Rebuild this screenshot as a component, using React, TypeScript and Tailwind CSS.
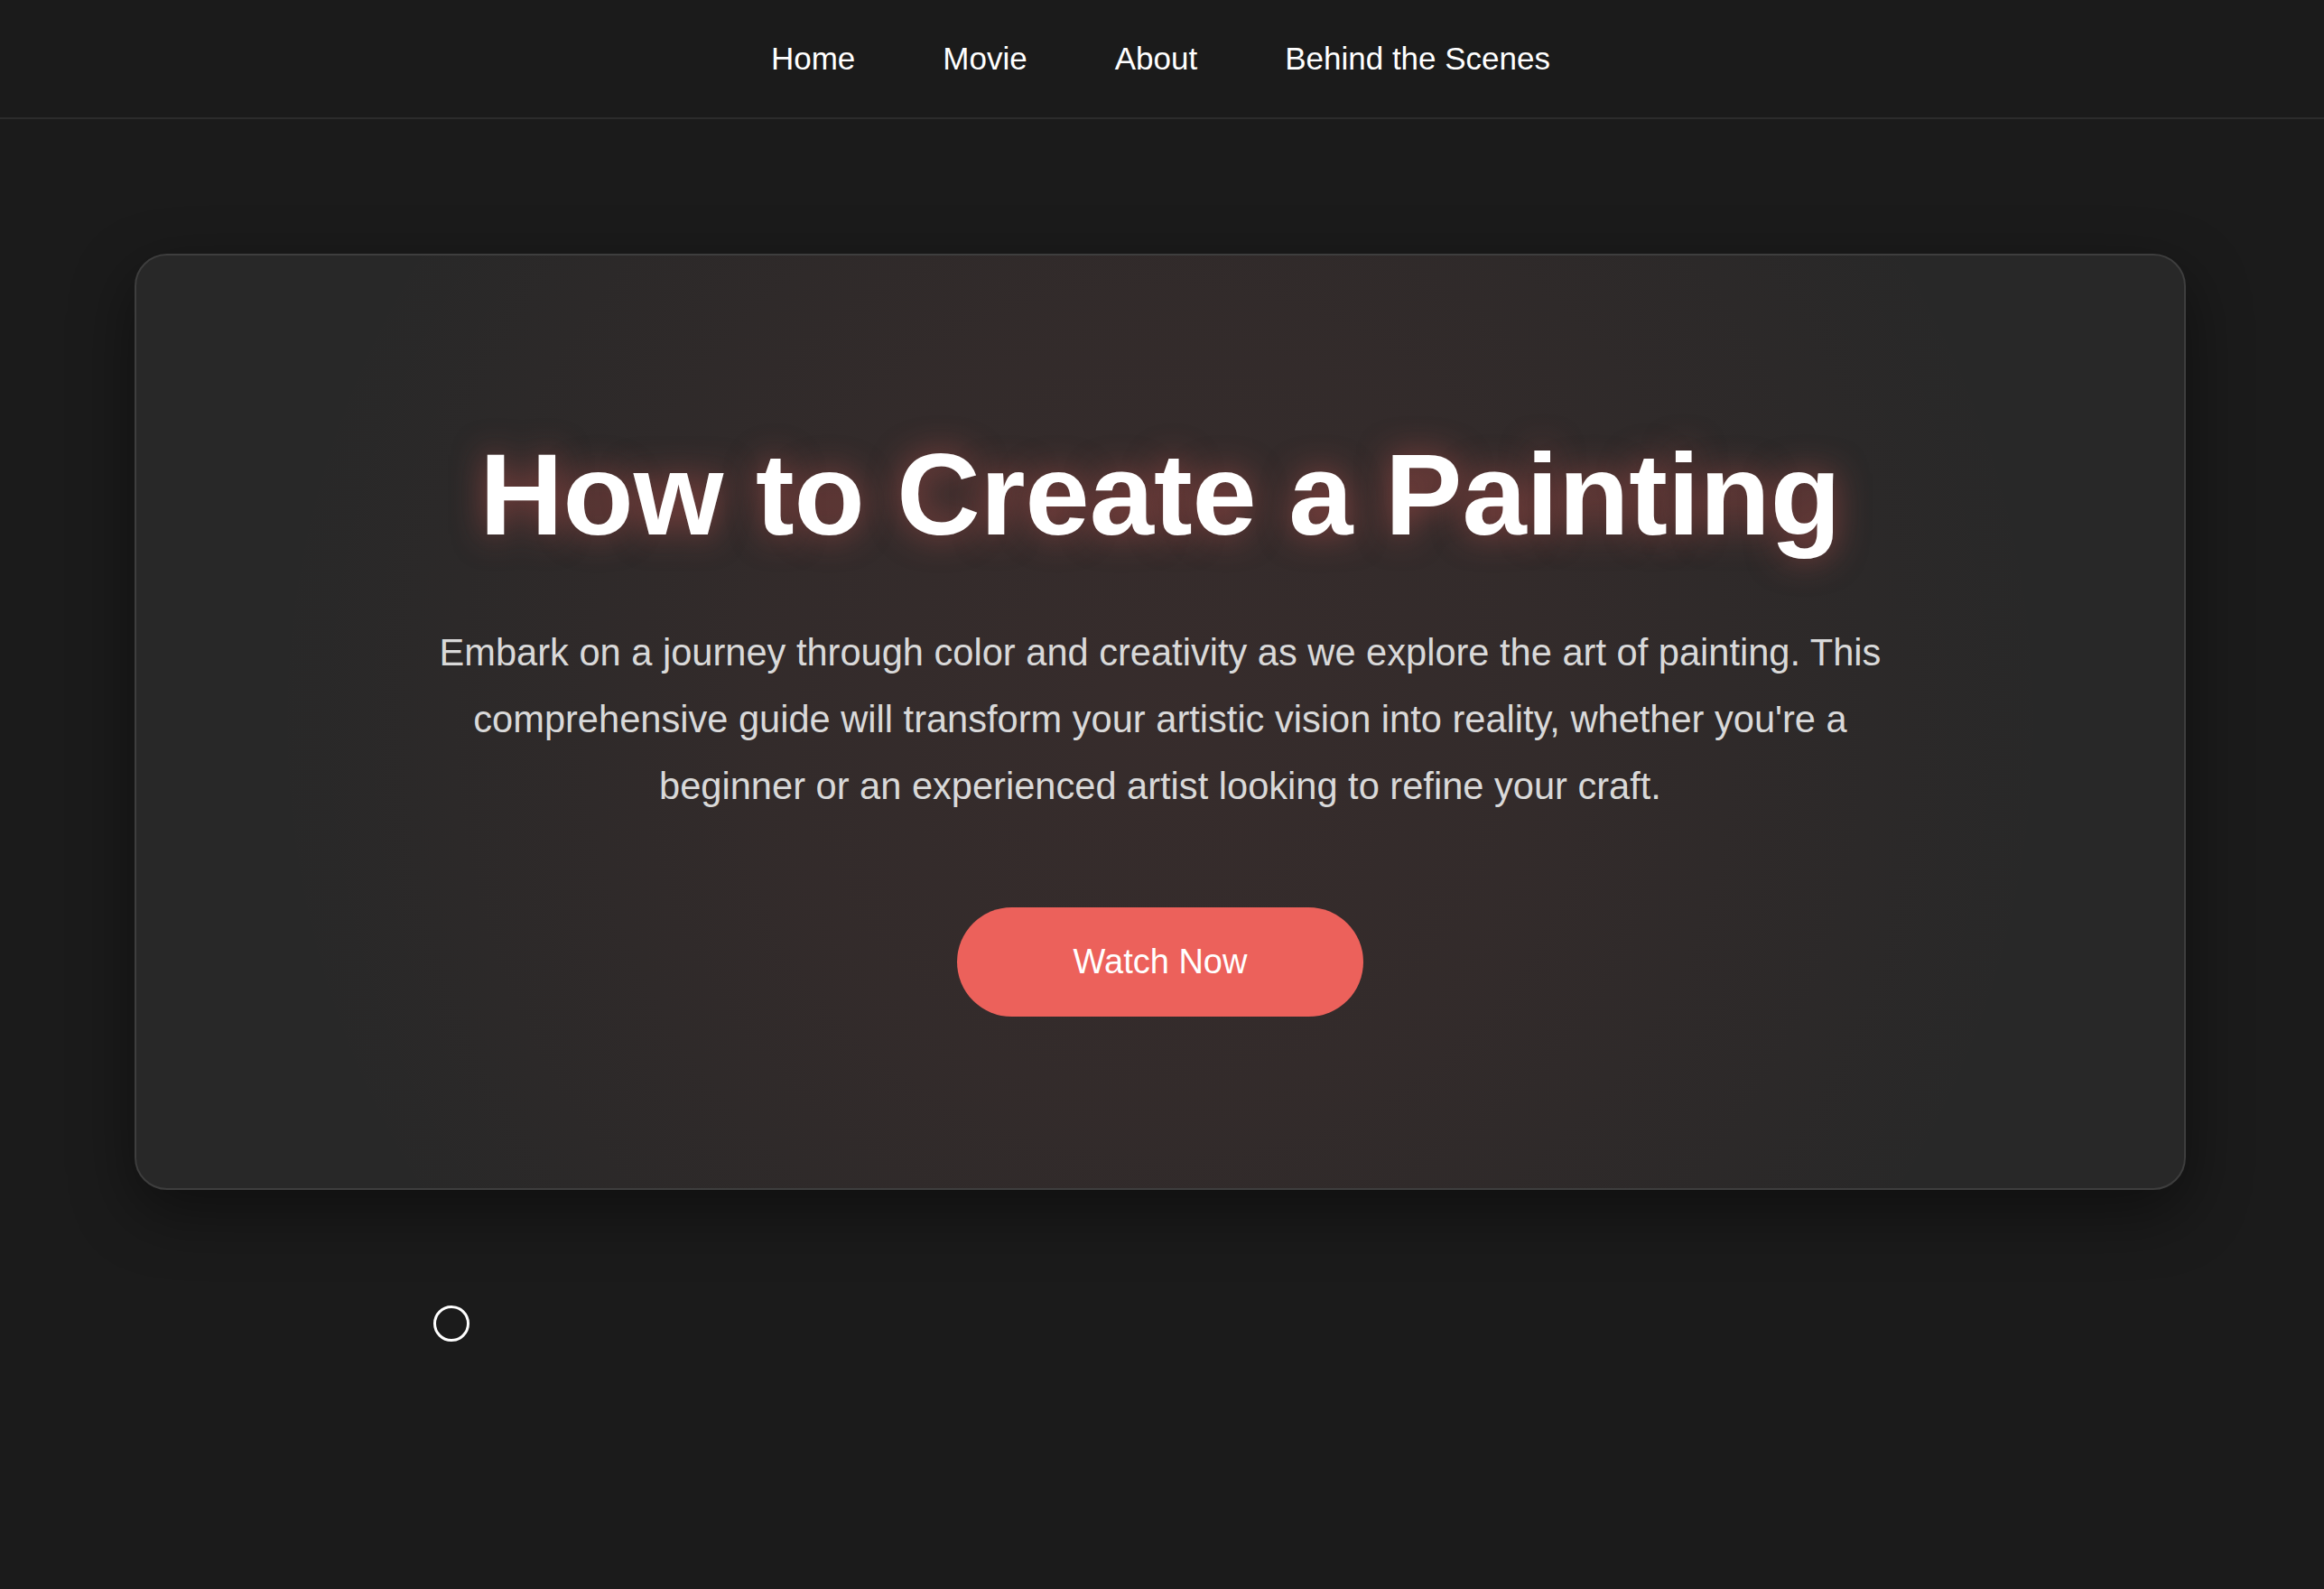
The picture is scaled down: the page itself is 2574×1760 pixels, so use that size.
import React from "react";

const navLinks = ["Home", "Movie", "About", "Behind the Scenes"];

export default function App() {
  return (
    <div
      className="relative min-h-screen bg-[#1b1b1b] text-white"
      style={{ fontFamily: '"Liberation Sans", Arial, Helvetica, sans-serif' }}
    >
      {/* Top navigation */}
      <nav className="h-[132px] border-b-2 border-[#2c2c2c] flex items-center justify-center">
        <ul className="flex items-center gap-[97px] pr-[3px]">
          {navLinks.map((link) => (
            <li key={link}>
              <a href="#" className="text-[35px] text-white leading-none">
                {link}
              </a>
            </li>
          ))}
        </ul>
      </nav>

      {/* Hero card */}
      <main className="pt-[149px] pl-[149px]">
        <section className="w-[2272px] rounded-[36px] border-2 border-[#3e3e3e] bg-[#282828] bg-[radial-gradient(circle_1100px_at_center,rgba(236,96,90,0.075)_0%,rgba(236,96,90,0.055)_40%,rgba(236,96,90,0)_90%)] shadow-[0_24px_70px_rgba(0,0,0,0.45)] pt-[188px] pb-[190px] flex flex-col items-center text-center">
          <h1 className="text-[128px] font-bold leading-[1.2] text-white [text-shadow:0_0_36px_rgba(236,96,90,0.5)]">
            How to Create a Painting
          </h1>
          <p className="mt-[61px] max-w-[1660px] text-[41.6px] leading-[74px] text-[#d9d9d9]">
            Embark on a journey through color and creativity as we explore the art of painting. This
            comprehensive guide will transform your artistic vision into reality, whether you're a
            beginner or an experienced artist looking to refine your craft.
          </p>
          <button className="mt-[97px] w-[450px] h-[121px] rounded-full bg-[#ec615b] text-[38px] text-white flex items-center justify-center">
            Watch Now
          </button>
        </section>
      </main>

      {/* Cursor ring */}
      <div className="absolute left-[480px] top-[1446px] w-[40px] h-[40px] rounded-full border-[3px] border-white" />
    </div>
  );
}
